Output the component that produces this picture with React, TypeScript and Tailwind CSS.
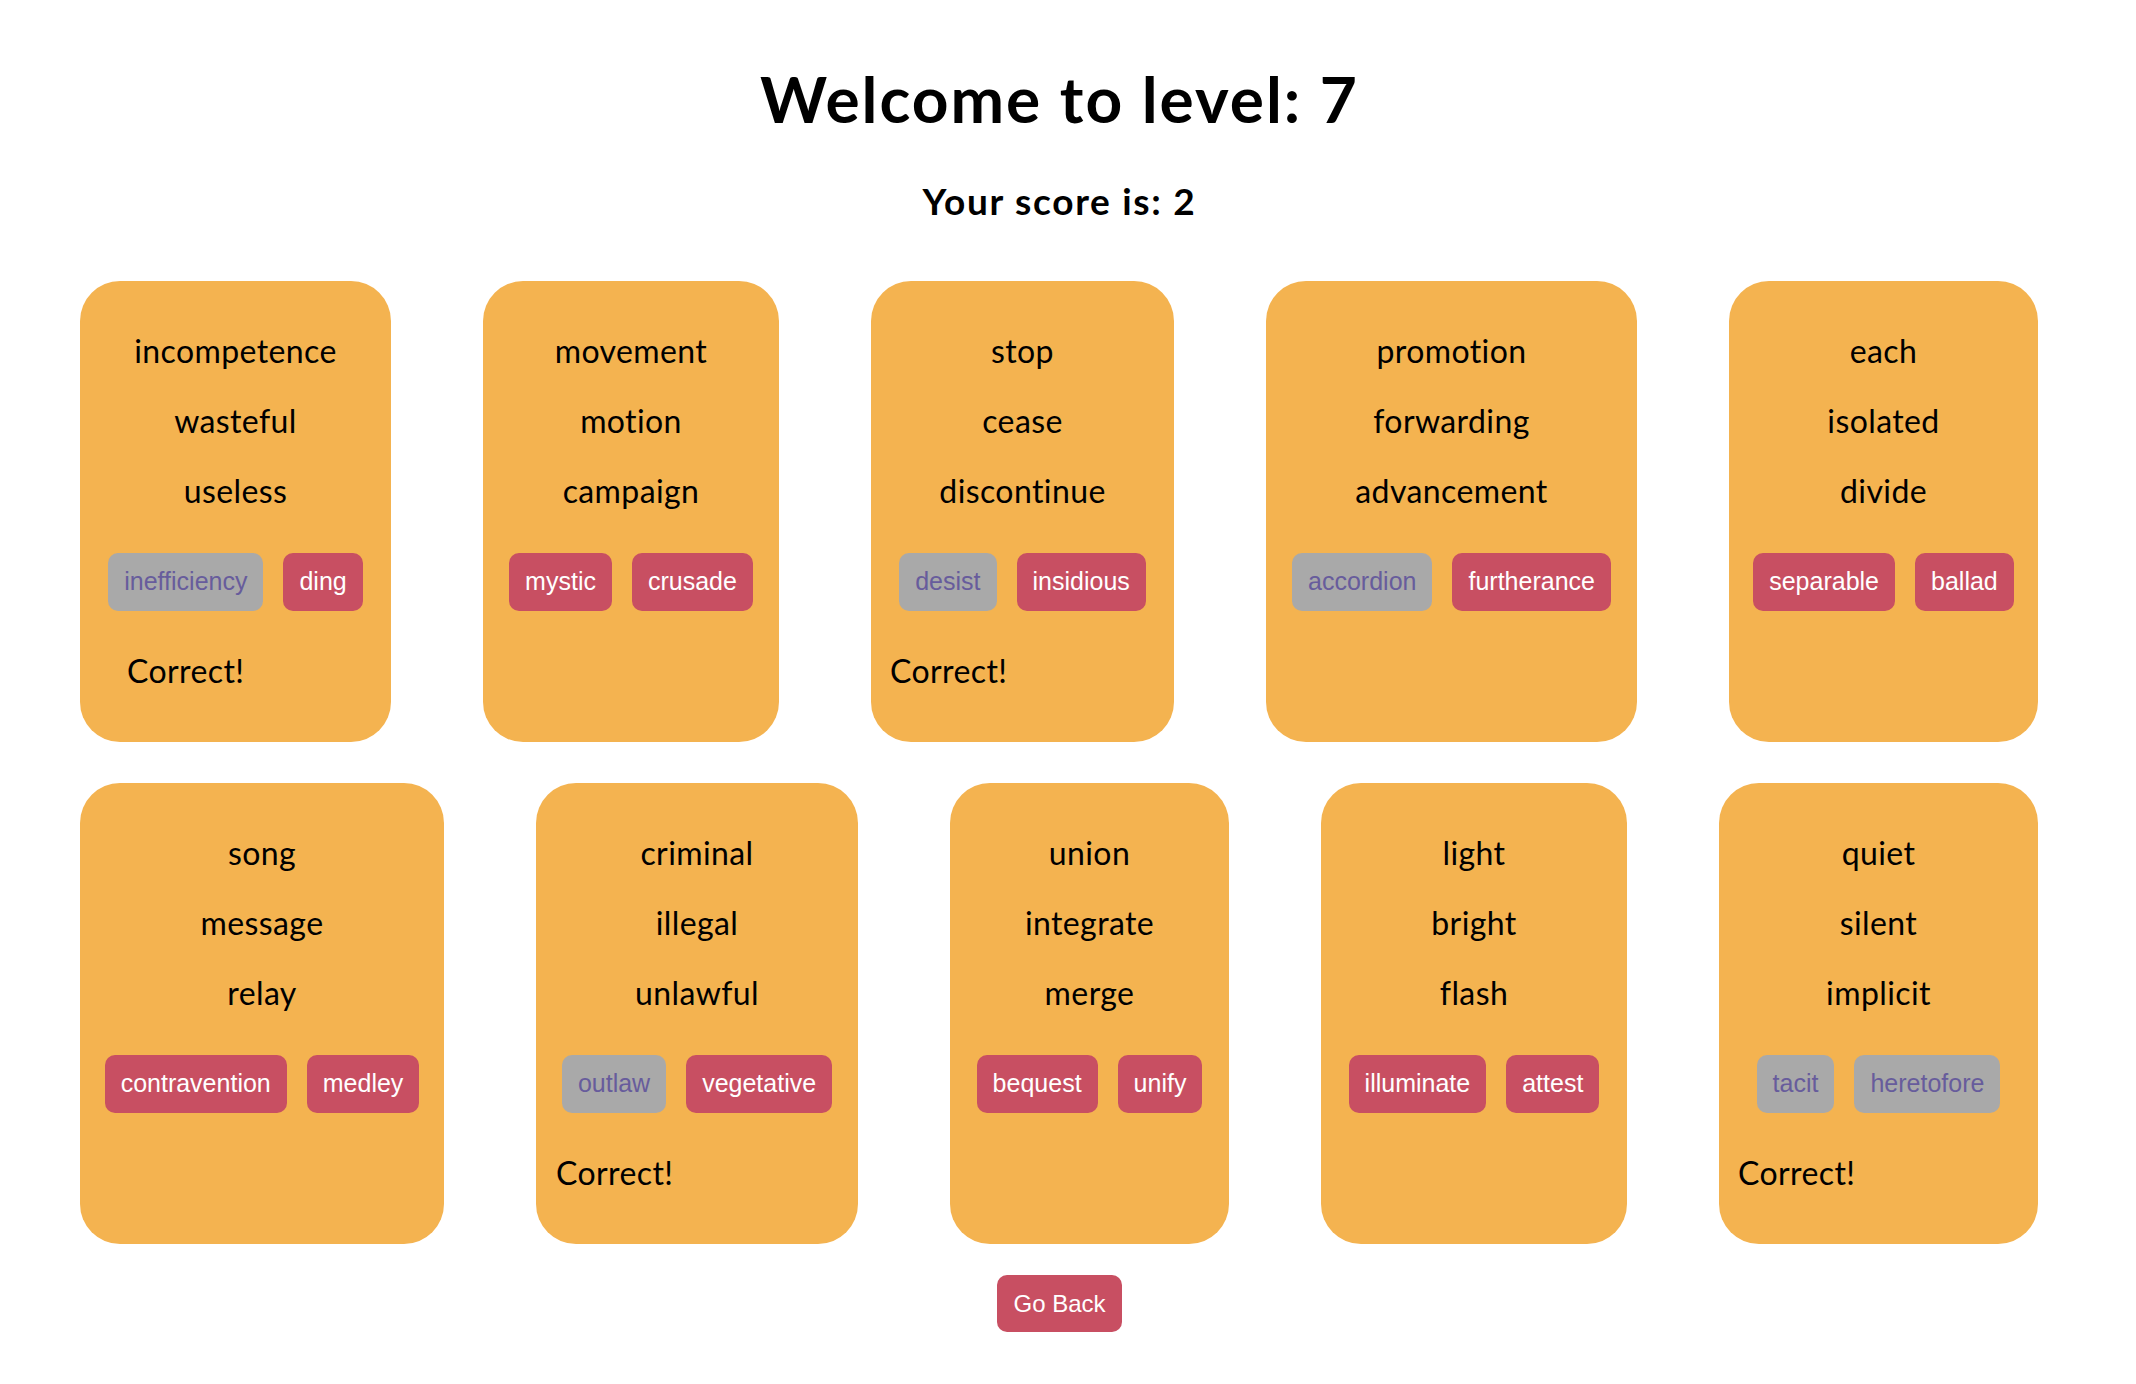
import React from "react";

type Card = {
  words: string[];
  options: { text: string; used?: boolean }[];
  correct?: boolean;
  w: string;
  pl: string;
};

const rowOne: Card[] = [
  {
    words: ["incompetence", "wasteful", "useless"],
    options: [{ text: "inefficiency", used: true }, { text: "ding" }],
    correct: true,
    w: "w-[311px]",
    pl: "pl-[47px]",
  },
  {
    words: ["movement", "motion", "campaign"],
    options: [{ text: "mystic" }, { text: "crusade" }],
    w: "w-[296px]",
    pl: "pl-[20px]",
  },
  {
    words: ["stop", "cease", "discontinue"],
    options: [{ text: "desist", used: true }, { text: "insidious" }],
    correct: true,
    w: "w-[303px]",
    pl: "pl-[19px]",
  },
  {
    words: ["promotion", "forwarding", "advancement"],
    options: [{ text: "accordion", used: true }, { text: "furtherance" }],
    w: "w-[371px]",
    pl: "pl-[20px]",
  },
  {
    words: ["each", "isolated", "divide"],
    options: [{ text: "separable" }, { text: "ballad" }],
    w: "w-[309px]",
    pl: "pl-[20px]",
  },
];

const rowTwo: Card[] = [
  {
    words: ["song", "message", "relay"],
    options: [{ text: "contravention" }, { text: "medley" }],
    w: "w-[364px]",
    pl: "pl-[20px]",
  },
  {
    words: ["criminal", "illegal", "unlawful"],
    options: [{ text: "outlaw", used: true }, { text: "vegetative" }],
    correct: true,
    w: "w-[322px]",
    pl: "pl-[20px]",
  },
  {
    words: ["union", "integrate", "merge"],
    options: [{ text: "bequest" }, { text: "unify" }],
    w: "w-[279px]",
    pl: "pl-[20px]",
  },
  {
    words: ["light", "bright", "flash"],
    options: [{ text: "illuminate" }, { text: "attest" }],
    w: "w-[306px]",
    pl: "pl-[20px]",
  },
  {
    words: ["quiet", "silent", "implicit"],
    options: [{ text: "tacit", used: true }, { text: "heretofore", used: true }],
    correct: true,
    w: "w-[319px]",
    pl: "pl-[19px]",
  },
];

function WordCard({ card }: { card: Card }) {
  return (
    <div className={`${card.w} h-[461px] shrink-0 rounded-[40px] bg-[#f4b350] pt-[51px] flex flex-col`}>
      <div className="flex flex-col items-center gap-[32px]">
        {card.words.map((w) => (
          <p key={w} className="text-[32px] leading-[38px] tracking-[0.4px] text-black">
            {w}
          </p>
        ))}
      </div>
      <div className="mt-[43px] flex justify-center gap-[20px]">
        {card.options.map((o) =>
          o.used ? (
            <button
              key={o.text}
              className="h-[58px] px-4 rounded-[10px] bg-[#a9a9a9] text-[#675c9c] text-[25px] font-['Liberation_Sans',sans-serif]"
            >
              {o.text}
            </button>
          ) : (
            <button
              key={o.text}
              className="h-[58px] px-4 rounded-[10px] bg-[#c84f62] text-white text-[25px] font-['Liberation_Sans',sans-serif]"
            >
              {o.text}
            </button>
          )
        )}
      </div>
      {card.correct && (
        <p className={`${card.pl} mt-[41px] text-[32px] leading-[38px] tracking-[0.4px] text-black`}>Correct!</p>
      )}
    </div>
  );
}

export default function App() {
  return (
    <div className="w-[2119px] min-h-[1384px] bg-white flex flex-col items-center font-['Trebuchet_MS','Lato',sans-serif]">
      <h1 className="mt-[60px] text-[64px] leading-[77px] tracking-[2px] font-bold text-black">
        Welcome to level: 7
      </h1>
      <h3 className="mt-[42px] text-[37px] leading-[44px] tracking-[1.7px] font-bold text-black">
        Your score is: 2
      </h3>

      <div className="mt-[58px] w-full px-[80px] flex flex-col gap-[41px]">
        <div className="flex gap-[92px]">
          {rowOne.map((c) => (
            <WordCard key={c.words[0]} card={c} />
          ))}
        </div>
        <div className="flex gap-[92px]">
          {rowTwo.map((c) => (
            <WordCard key={c.words[0]} card={c} />
          ))}
        </div>
      </div>

      <button className="mt-[31px] h-[57px] px-4 rounded-[10px] bg-[#c84f62] text-white text-[24px] font-['Liberation_Sans',sans-serif]">
        Go Back
      </button>
    </div>
  );
}
